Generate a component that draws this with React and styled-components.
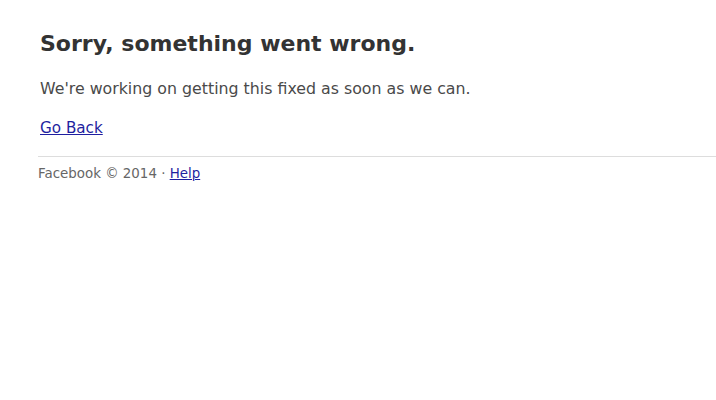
import React from 'react'
import styled, { createGlobalStyle } from 'styled-components'

const GlobalStyle = createGlobalStyle`
  body {
    margin: 0;
    background: #fff;
    font-family: "DejaVu Sans", Verdana, sans-serif;
  }
`

const Page = styled.div`
  padding: 29px 0 0 40px;
`

const Title = styled.h1`
  margin: 0;
  font-size: 22px;
  font-weight: bold;
  color: #333;
  line-height: 30px;
`

const Message = styled.p`
  margin: 20px 0 0;
  font-size: 15.8px;
  color: #4a4a4a;
  line-height: 20px;
`

const BackLink = styled.a`
  display: inline-block;
  margin-top: 19px;
  font-size: 15.2px;
  line-height: 20px;
  color: #1f1fa0;
  text-decoration: underline;
`

const Footer = styled.div`
  margin-top: 18px;
  margin-left: -2px;
  border-top: 1px solid #ddd;
  padding-top: 8px;
  font-size: 13.4px;
  color: #666;
  line-height: 18px;
  a {
    color: #1f1fa0;
  }
`

export default function App() {
  return (
    <>
      <GlobalStyle />
      <Page>
        <Title>Sorry, something went wrong.</Title>
        <Message>We're working on getting this fixed as soon as we can.</Message>
        <BackLink href="#">Go Back</BackLink>
        <Footer>
          Facebook © 2014 · <a href="#">Help</a>
        </Footer>
      </Page>
    </>
  )
}
